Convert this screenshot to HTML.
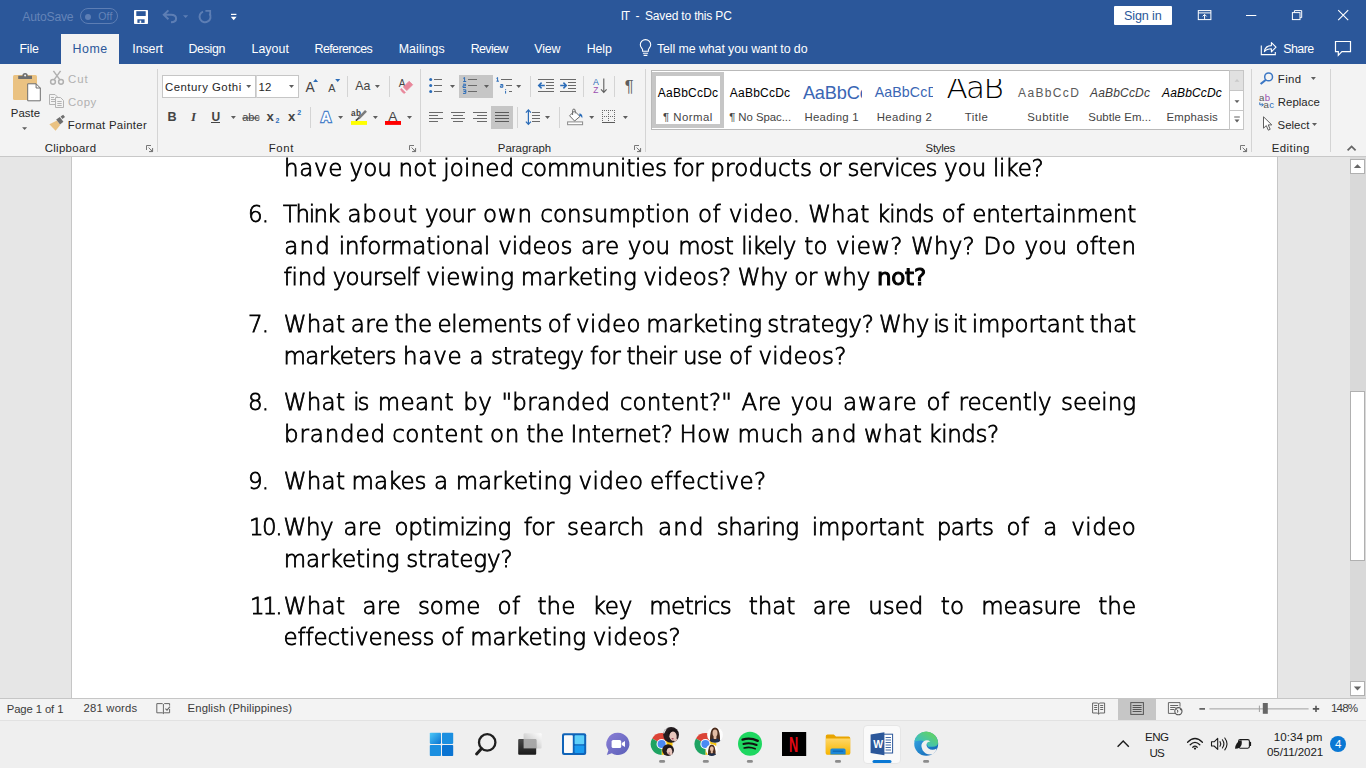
<!DOCTYPE html>
<html lang="en">
<head>
<meta charset="utf-8">
<title>IT - Word</title>
<style>
*{box-sizing:border-box;margin:0;padding:0}
html,body{width:1366px;height:768px;overflow:hidden;background:#f3f3f3}
body{font-family:"Liberation Sans","DejaVu Sans",sans-serif;font-size:12px;color:#262626;position:relative}
.abs{position:absolute}
.t{position:absolute;white-space:nowrap;line-height:1}
#titlebar{position:absolute;left:0;top:0;width:1366px;height:64px;background:#2b579a}
#ribbon{position:absolute;left:0;top:64px;width:1366px;height:93px;background:#f3f3f3;border-bottom:1px solid #c8c8c8;z-index:2}
#docarea{position:absolute;left:0;top:156px;width:1366px;height:542px;background:#e6e6e6;overflow:hidden}
#page{position:absolute;left:71px;top:-1px;width:1207px;height:546px;background:#fff;border-left:1px solid #c6c6c6;border-right:1px solid #c6c6c6}
#status{position:absolute;left:0;top:698px;width:1366px;height:22px;background:#f3f3f3;border-top:1px solid #c6c6c6}
#taskbar{position:absolute;left:0;top:720px;width:1366px;height:48px;background:#efefef}
.wt{color:#fff}
.sep{position:absolute;width:1px;background:#d4d4d4}
.dl{position:absolute;white-space:nowrap;line-height:1;color:#000;font-size:23px;font-weight:200;-webkit-text-stroke:0.8px #000;font-family:"DejaVu Sans Light","DejaVu Sans","Liberation Sans",sans-serif}
</style>
</head>
<body>
<div id="titlebar">
<div class="abs" style="left:61px;top:34px;width:58px;height:30px;background:#f3f3f3"></div>
<div class="abs" style="left:80px;top:8px;width:38px;height:16px;border:1px solid #5d7eb4;border-radius:8px"></div>
<div class="abs" style="left:85.4px;top:13.5px;width:6px;height:6px;border-radius:3px;background:#5d7eb4"></div>
<div class="abs" style="left:1114px;top:6px;width:58px;height:19px;background:#fff;border-radius:1px"></div>
<div class="t" style="left:22.35px;top:11.15px;font-size:12.2px;letter-spacing:-0.222px;color:#6484b8">AutoSave</div>
<div class="t" style="left:98.27px;top:11.00px;font-size:10.5px;letter-spacing:0.129px;color:#6484b8">Off</div>
<div class="t" style="left:620.76px;top:10.25px;font-size:12px;letter-spacing:-1.292px;color:#ffffff">IT</div>
<div class="t" style="left:635.56px;top:10.25px;font-size:12px;letter-spacing:0.000px;color:#ffffff">-</div>
<div class="t" style="left:644.96px;top:10.25px;font-size:12px;letter-spacing:-0.167px;color:#ffffff">Saved to this PC</div>
<div class="t" style="left:1124.12px;top:9.95px;font-size:12.6px;letter-spacing:-0.159px;color:#2b579a">Sign in</div>
<div class="t" style="left:19.53px;top:43.05px;font-size:12.4px;letter-spacing:-0.211px;color:#ffffff">File</div>
<div class="t" style="left:72.53px;top:43.05px;font-size:12.4px;letter-spacing:0.524px;color:#2b579a">Home</div>
<div class="t" style="left:132.33px;top:43.05px;font-size:12.4px;letter-spacing:-0.093px;color:#ffffff">Insert</div>
<div class="t" style="left:188.53px;top:43.05px;font-size:12.4px;letter-spacing:-0.348px;color:#ffffff">Design</div>
<div class="t" style="left:251.53px;top:43.05px;font-size:12.4px;letter-spacing:0.027px;color:#ffffff">Layout</div>
<div class="t" style="left:314.53px;top:43.05px;font-size:12.4px;letter-spacing:-0.571px;color:#ffffff">References</div>
<div class="t" style="left:398.73px;top:43.05px;font-size:12.4px;letter-spacing:0.083px;color:#ffffff">Mailings</div>
<div class="t" style="left:470.63px;top:43.05px;font-size:12.4px;letter-spacing:-0.561px;color:#ffffff">Review</div>
<div class="t" style="left:534.33px;top:43.05px;font-size:12.4px;letter-spacing:-0.168px;color:#ffffff">View</div>
<div class="t" style="left:586.63px;top:43.05px;font-size:12.4px;letter-spacing:-0.049px;color:#ffffff">Help</div>
<div class="t" style="left:656.93px;top:43.05px;font-size:12.4px;letter-spacing:-0.087px;color:#ffffff">Tell me what you want to do</div>
<div class="t" style="left:1283.23px;top:43.05px;font-size:12.4px;letter-spacing:-0.536px;color:#ffffff">Share</div>
<svg class="abs" style="left:0;top:0" width="1366" height="64" viewBox="0 0 1366 64" fill="none">
<!-- save -->
<rect x="134" y="10" width="14" height="14" rx="0.8" fill="#fff"/>
<rect x="136.3" y="11.2" width="9.4" height="4.8" fill="#2b579a"/>
<rect x="137.4" y="19.3" width="7.2" height="3.6" fill="#2b579a"/>
<rect x="139.6" y="20.6" width="1.6" height="2.3" fill="#fff"/>
<!-- undo -->
<path d="M168.4 10.4 L163.8 14.8 L168.4 19.2 M164.2 14.8 H171 C177.8 14.8 177.8 22.2 171 22.2" stroke="#5d7eb4" stroke-width="2"/>
<path d="M183 15.2 h5.2 l-2.6 2.8 z" fill="#5d7eb4"/>
<!-- redo -->
<path d="M209.6 13.6 A5.5 5.5 0 1 1 203 11.6" stroke="#5d7eb4" stroke-width="2"/>
<path d="M205.4 10.8 H210.2 V15.4" stroke="#5d7eb4" stroke-width="1.8"/>
<!-- customize -->
<rect x="231" y="13.8" width="5.4" height="1.2" fill="#fff"/>
<path d="M230.8 16.8 h5.8 l-2.9 3.4 z" fill="#fff"/>
<!-- ribbon display -->
<rect x="1198.3" y="10.6" width="12.6" height="9" stroke="#fff" stroke-width="1"/>
<path d="M1198.3 12.9 h12.6" stroke="#fff" stroke-width="1"/>
<path d="M1204.6 19 v-4.4 M1202.6 16.4 l2 -2 l2 2" stroke="#fff" stroke-width="1"/>
<!-- min -->
<path d="M1246 15.5 h10.3" stroke="#fff" stroke-width="1"/>
<!-- restore -->
<rect x="1292.4" y="12.6" width="7.6" height="7" stroke="#fff" stroke-width="1"/>
<path d="M1294.4 12.4 v-1.8 h7.3 v7 h-1.6" stroke="#fff" stroke-width="1"/>
<!-- close -->
<path d="M1338.2 10.2 l10 10 M1348.2 10.2 l-10 10" stroke="#fff" stroke-width="1.1"/>
<!-- lightbulb -->
<path d="M642.6 51.2 v-1.4 c0 -1.4 -2.3 -2.4 -2.3 -5 a5.2 5.2 0 0 1 10.4 0 c0 2.6 -2.3 3.6 -2.3 5 v1.4 z" stroke="#fff" stroke-width="1.1"/>
<path d="M642.9 53.3 h5.2 M643.6 55.4 h3.8" stroke="#fff" stroke-width="1.1"/>
<!-- share -->
<path d="M1261.3 45.6 v9 h14 v-2.6" stroke="#fff" stroke-width="1.1"/>
<path d="M1264.4 51.6 c0.6 -4 3.4 -6 7 -6 v-3 l4.6 4.6 l-4.6 4.6 v-3 c-3 0 -5.2 0.6 -7 2.8 z" stroke="#fff" stroke-width="1.1" stroke-linejoin="round"/>
<!-- comment -->
<path d="M1335.5 41.5 h15 v10.2 h-8.6 l-3.6 3.6 v-3.6 h-2.8 z" stroke="#fff" stroke-width="1.2"/>
</svg>

</div>
<div id="ribbon">
<div class="abs" style="left:459px;top:11px;width:34px;height:23px;background:#c6c6c6"></div>
<div class="abs" style="left:491px;top:42px;width:22px;height:23px;background:#c6c6c6"></div>
<div class="abs" style="left:162px;top:11.4px;width:94px;height:22.4px;background:#fff;border:1px solid #c6c6c6"></div>
<div class="abs" style="left:256px;top:11.4px;width:43px;height:22.4px;background:#fff;border:1px solid #c6c6c6;border-left-color:#d8d8d8"></div>
<div class="sep" style="left:157px;top:4.5px;height:83px"></div>
<div class="sep" style="left:420px;top:4.5px;height:83px"></div>
<div class="sep" style="left:645px;top:4.5px;height:83px"></div>
<div class="sep" style="left:1251px;top:4.5px;height:83px"></div>
<div class="sep" style="left:1330px;top:4.5px;height:83px"></div>
<div class="sep" style="left:347px;top:12.2px;height:20.6px"></div>
<div class="sep" style="left:389px;top:12.2px;height:20.6px"></div>
<div class="sep" style="left:530px;top:12.2px;height:20.6px"></div>
<div class="sep" style="left:583px;top:12.2px;height:20.6px"></div>
<div class="sep" style="left:614px;top:12.2px;height:20.6px"></div>
<div class="sep" style="left:310px;top:43.1px;height:20.6px"></div>
<div class="sep" style="left:517px;top:43.1px;height:20.6px"></div>
<div class="sep" style="left:559px;top:43.1px;height:20.6px"></div>
<div class="t" style="left:10.80px;top:43.55px;font-size:11.4px;letter-spacing:0.014px;color:#262626">Paste</div>
<div class="t" style="left:68.00px;top:9.55px;font-size:11.4px;letter-spacing:0.981px;color:#b1b1b1">Cut</div>
<div class="t" style="left:68.00px;top:32.55px;font-size:11.4px;letter-spacing:0.567px;color:#b1b1b1">Copy</div>
<div class="t" style="left:67.80px;top:55.55px;font-size:11.4px;letter-spacing:0.273px;color:#262626">Format Painter</div>
<div class="t" style="left:44.70px;top:78.55px;font-size:11.4px;letter-spacing:0.316px;color:#262626">Clipboard</div>
<div class="t" style="left:165.00px;top:17.55px;font-size:11.4px;letter-spacing:0.493px;color:#262626">Century Gothi</div>
<div class="t" style="left:258.50px;top:17.55px;font-size:11.4px;letter-spacing:0.128px;color:#262626">12</div>
<div class="t" style="left:268.70px;top:78.55px;font-size:11.4px;letter-spacing:0.666px;color:#262626">Font</div>
<div class="t" style="left:167.62px;top:46.95px;font-size:12.6px;letter-spacing:0.000px;color:#444444;font-weight:700">B</div>
<div class="t" style="left:191.00px;top:46.25px;font-size:13px;letter-spacing:0.000px;color:#444444;font-weight:700;font-style:italic;font-family:'Liberation Serif',sans-serif">I</div>
<div class="t" style="left:211.46px;top:47.25px;font-size:12px;letter-spacing:0.000px;color:#444444;font-weight:700;border-bottom:1px solid #444;height:12.2px">U</div>
<div class="t" style="left:242.13px;top:47.75px;font-size:11px;letter-spacing:-0.055px;color:#444444">abc</div>
<div class="t" style="left:266.48px;top:46.15px;font-size:13.2px;letter-spacing:0.000px;color:#444444;font-weight:700">x</div>
<div class="t" style="left:275.40px;top:53.25px;font-size:7px;letter-spacing:0.000px;color:#2b6cb8;font-weight:700">2</div>
<div class="t" style="left:288.08px;top:46.15px;font-size:13.2px;letter-spacing:0.000px;color:#444444;font-weight:700">x</div>
<div class="t" style="left:297.20px;top:45.25px;font-size:7px;letter-spacing:0.000px;color:#2b6cb8;font-weight:700">2</div>
<div class="t" style="left:305.40px;top:16.85px;font-size:13.8px;letter-spacing:0.000px;color:#444444">A</div>
<div class="t" style="left:328.30px;top:18.85px;font-size:10.8px;letter-spacing:0.000px;color:#444444">A</div>
<div class="t" style="left:355.20px;top:16.05px;font-size:12.4px;letter-spacing:0.044px;color:#444444">Aa</div>
<div class="t" style="left:398.80px;top:14.75px;font-size:10px;letter-spacing:0.000px;color:#444444">A</div>
<div class="t" style="left:350.90px;top:45.65px;font-size:8.2px;letter-spacing:0.438px;color:#444444;font-weight:700">ab</div>
<div class="t" style="left:321.10px;top:46.25px;font-size:14px;letter-spacing:0.000px;color:#fff;font-weight:700;-webkit-text-stroke:2.4px #3f78c4;paint-order:stroke fill;text-shadow:0 0 1.5px #9fc0ea">A</div>
<div class="t" style="left:388.30px;top:45.95px;font-size:13.6px;letter-spacing:0.000px;color:#444444">A</div>
<div class="t" style="left:497.80px;top:78.55px;font-size:11.4px;letter-spacing:0.024px;color:#262626">Paragraph</div>
<div class="t" style="left:593.10px;top:13.85px;font-size:8.8px;letter-spacing:0.000px;color:#2b6cb8">A</div>
<div class="t" style="left:593.20px;top:22.05px;font-size:8.4px;letter-spacing:0.000px;color:#9b4fb0">Z</div>
<div class="t" style="left:624.70px;top:14.00px;font-size:16.5px;letter-spacing:0.000px;color:#5e5e5e">&para;</div>
<div class="t" style="left:925.60px;top:78.55px;font-size:11.4px;letter-spacing:-0.267px;color:#262626">Styles</div>
<div class="t" style="left:1277.80px;top:9.55px;font-size:11.4px;letter-spacing:0.375px;color:#262626">Find</div>
<div class="t" style="left:1277.80px;top:32.55px;font-size:11.4px;letter-spacing:0.033px;color:#262626">Replace</div>
<div class="t" style="left:1277.50px;top:55.55px;font-size:11.4px;letter-spacing:0.045px;color:#262626">Select</div>
<div class="t" style="left:1271.70px;top:78.55px;font-size:11.4px;letter-spacing:0.475px;color:#262626">Editing</div>
<div class="t" style="left:1258.93px;top:28.95px;font-size:9.6px;letter-spacing:0.000px;color:#555">a</div>
<div class="t" style="left:1264.73px;top:28.95px;font-size:9.6px;letter-spacing:0.000px;color:#9b4fb0">b</div>
<div class="t" style="left:1263.53px;top:35.95px;font-size:9.6px;letter-spacing:0.000px;color:#555">a</div>
<div class="t" style="left:1269.33px;top:35.95px;font-size:9.6px;letter-spacing:0.000px;color:#2b6cb8">c</div>
<div class="abs" style="left:651px;top:6px;width:593px;height:60px;background:#fff;border:1px solid #b9b9b9"></div>
<div class="abs" style="left:652px;top:8px;width:72px;height:56px;border:4px solid #c6c6c6;background:#fff"></div>
<div class="abs" style="left:1229px;top:6px;width:15px;height:21.4px;background:#e1e1e1;border:1px solid #c6c6c6"></div>
<div class="abs" style="left:1229px;top:26.4px;width:15px;height:20.4px;background:#fff;border:1px solid #c6c6c6"></div>
<div class="abs" style="left:1229px;top:45.8px;width:15px;height:20.2px;background:#fff;border:1px solid #c6c6c6"></div>
<div class="t" style="left:657.86px;top:23.25px;font-size:12px;letter-spacing:0.213px;color:#000">AaBbCcDc</div>
<div class="t" style="left:663.10px;top:47.55px;font-size:11.4px;letter-spacing:0.457px;color:#444444">&para; Normal</div>
<div class="t" style="left:729.86px;top:23.25px;font-size:12px;letter-spacing:0.213px;color:#000">AaBbCcDc</div>
<div class="t" style="left:729.20px;top:47.55px;font-size:11.4px;letter-spacing:-0.052px;color:#444444">&para; No Spac...</div>
<div class="t" style="left:804.50px;top:47.55px;font-size:11.4px;letter-spacing:0.282px;color:#444444">Heading 1</div>
<div class="t" style="left:876.70px;top:47.55px;font-size:11.4px;letter-spacing:0.395px;color:#444444">Heading 2</div>
<div class="t" style="left:964.70px;top:47.55px;font-size:11.4px;letter-spacing:0.522px;color:#444444">Title</div>
<div class="t" style="left:1018.06px;top:23.25px;font-size:12px;letter-spacing:1.349px;color:#5a5a5a">AaBbCcD</div>
<div class="t" style="left:1027.20px;top:47.55px;font-size:11.4px;letter-spacing:0.528px;color:#444444">Subtitle</div>
<div class="t" style="left:1090.06px;top:23.25px;font-size:12px;letter-spacing:0.170px;color:#404040;font-style:italic">AaBbCcDc</div>
<div class="t" style="left:1088.30px;top:47.55px;font-size:11.4px;letter-spacing:0.068px;color:#444444">Subtle Em...</div>
<div class="t" style="left:1162.06px;top:23.25px;font-size:12px;letter-spacing:0.142px;color:#000;font-style:italic">AaBbCcDc</div>
<div class="t" style="left:1166.60px;top:47.55px;font-size:11.4px;letter-spacing:0.169px;color:#444444">Emphasis</div>
<div class="abs" style="left:796px;top:14px;width:65.6px;height:26px;overflow:hidden"><div class="t" style="left:6.90px;top:6.15px;font-size:18.2px;letter-spacing:-0.150px;color:#3a66b4">AaBbCc</div>
</div>
<div class="abs" style="left:868px;top:14px;width:65.2px;height:26px;overflow:hidden"><div class="t" style="left:6.70px;top:7.15px;font-size:14.2px;letter-spacing:0.120px;color:#3a66b4">AaBbCcD</div>
</div>
<div class="abs" style="left:940px;top:14.8px;width:72px;height:24px;overflow:hidden"><div class="t" style="left:6.4px;top:-6.6px;font-size:31px;color:#000;font-family:'DejaVu Sans Light','Liberation Sans',sans-serif;font-weight:200;letter-spacing:-1.5px">AaB</div></div>
<svg class="abs" style="left:0;top:0" width="1366" height="92" viewBox="0 64 1366 92" fill="none">
<defs>
<path id="dd" d="M0 0 h5 l-2.5 2.9 z" fill="#5e5e5e"/>
<path id="ln" d="M0 0 h7 M3 0 v-0.1" />
<g id="launch"><path d="M0.5 5 v-4.5 h4.5" stroke="#777" stroke-width="1"/><path d="M2.6 2.6 l3.6 3.6 M6.6 3 v3.6 h-3.6" stroke="#777" stroke-width="1"/><path d="M6.9 6.9 h-3.4 l3.4 -3.4 z" fill="#777"/></g>
</defs>
<!-- paste -->
<rect x="13" y="75" width="24" height="25" rx="1.5" fill="#eac282"/>
<path d="M18.2 79 v-3.2 h4.2 a2.7 2.7 0 0 1 5.4 0 h4.2 v3.2 z" fill="#6e6e6e"/>
<circle cx="25.1" cy="75.4" r="1" fill="#f3f3f3"/>
<path d="M27.7 83.8 h8.4 l4.2 4.2 v12.8 h-12.6 z" fill="#fff" stroke="#6e6e6e" stroke-width="1"/>
<path d="M36.1 83.8 v4.2 h4.2" stroke="#6e6e6e" stroke-width="1"/>
<use href="#dd" x="22.1" y="127.2"/>
<!-- cut -->
<g stroke="#b0b0b0" stroke-width="1.5">
<path d="M53.4 70.9 l6.6 9 M60.6 70.9 l-6.6 9"/>
<circle cx="53" cy="81.8" r="2.4"/><circle cx="61" cy="81.8" r="2.4"/>
</g>
<!-- copy -->
<g stroke="#b3b3b3" stroke-width="1" fill="#f3f3f3">
<path d="M49.5 94.5 h5.5 l2.5 2.5 v7.5 h-8 z"/>
<path d="M51 97.5 h3 M51 99.5 h4 M51 101.5 h4" />
<path d="M55.5 97.5 h5 l3 3 v7 h-8 z"/>
<path d="M57.3 101.5 h4.4 M57.3 103.5 h4.4 M57.3 105.5 h4.4"/>
</g>
<!-- format painter -->
<path d="M49.4 124.2 l7.6 -3.6 l3.2 4.4 l-4.6 5.8 z" fill="#eac282"/>
<path d="M56.2 119.6 l3.6 -2.6 l3.6 4.8 l-3.4 2.6 z" fill="#6e6e6e"/>
<path d="M60.6 116.6 l2.6 -1.9 l1.8 2.4 l-2.6 1.9 z" fill="#6e6e6e"/>
<use href="#launch" x="146" y="145"/>
<use href="#launch" x="409" y="145"/>
<use href="#launch" x="634" y="145"/>
<use href="#launch" x="1240" y="145"/>
<!-- combo arrows -->
<use href="#dd" x="246.2" y="85"/>
<use href="#dd" x="289" y="85"/>
<!-- underline arrow, abc strike -->
<use href="#dd" x="230.9" y="116"/>
<path d="M242.4 118 h17.2" stroke="#444" stroke-width="1"/>
<!-- grow/shrink triangles -->
<path d="M313.1 82.1 h5 l-2.5 -3.2 z" fill="#2b6cb8"/>
<path d="M335.2 78.9 h5 l-2.5 3.2 z" fill="#2b6cb8"/>
<use href="#dd" x="374.9" y="85"/>
<!-- eraser -->
<path d="M409.1 81.300 L412.700 84.700 L406.800 90.600 L403.400 87 Z" fill="#e8879a" stroke="#e8879a" stroke-width="0.800" stroke-linejoin="round"/>
<path d="M401.400 88.300 L405.600 92.500 L404.100 93.600 Q402 92.400 400.400 89.400 Z" fill="#e8879a" stroke="#e8879a" stroke-width="0.500" stroke-linejoin="round"/>
<!-- text effects A (text) -->
<use href="#dd" x="338.1" y="116"/>
<!-- highlight -->
<path d="M366 110.8 l-7.4 7.6" stroke="#7a7a7a" stroke-width="2.6"/>
<path d="M358.8 118.2 l-3 2.4" stroke="#444" stroke-width="1.6"/>
<rect x="351" y="121" width="16" height="3.9" fill="#ffff00"/>
<use href="#dd" x="372.9" y="116"/>
<rect x="385" y="121" width="16" height="3.9" fill="#ff0000"/>
<use href="#dd" x="407" y="116"/>
<!-- bullets -->
<g fill="#2b6cb8"><circle cx="430.7" cy="79.5" r="1.5"/><circle cx="430.7" cy="85.6" r="1.5"/><circle cx="430.7" cy="91.6" r="1.5"/></g>
<path d="M434 79.5 h8 M434 85.5 h8 M434 91.5 h8" stroke="#6a6a6a" stroke-width="1"/>
<use href="#dd" x="450" y="85"/>
<!-- numbering -->
<path d="M468 79.5 h9 M468 85.5 h9 M468 91.5 h9" stroke="#6a6a6a" stroke-width="1"/>
<g stroke="#2b6cb8" stroke-width="1">
<path d="M463.2 78.4 l1.4 -0.9 v4 M463.2 81.5 h3"/>
<path d="M463 84.2 h2.6 v1.6 h-2.6 v1.7 h3"/>
<path d="M463 89.8 h2.8 v3.6 h-2.8 M463.6 91.5 h2.2"/>
</g>
<use href="#dd" x="484" y="85"/>
<!-- multilevel -->
<path d="M501 79.5 h11 M506 85.5 h6 M509 91.5 h3" stroke="#6a6a6a" stroke-width="1"/>
<g stroke="#2b6cb8" stroke-width="1">
<path d="M496.4 78.4 l1.2 -0.9 v3.6 M496.4 81.2 h2.6"/>
<path d="M500.4 84.5 h2.4 v2.8 h-2.4 v-1.4 h2.4"/>
<path d="M505.6 89 v0.8 M505.6 90.8 v2.8"/>
</g>
<use href="#dd" x="516.2" y="85"/>
<!-- decrease indent -->
<path d="M538 79.5 h16 M546 82.5 h8 M546 85.5 h8 M546 88.5 h8 M538 91.5 h16" stroke="#6a6a6a" stroke-width="1"/>
<path d="M544.8 85.5 h-5.6 M541.6 82.6 l-2.9 2.9 l2.9 2.9" stroke="#2b6cb8" stroke-width="1.5"/>
<!-- increase indent -->
<path d="M560 79.5 h16 M568 82.5 h8 M568 85.5 h8 M568 88.5 h8 M560 91.5 h16" stroke="#6a6a6a" stroke-width="1"/>
<path d="M560.2 85.5 h5.6 M563.4 82.6 l2.9 2.9 l-2.9 2.9" stroke="#2b6cb8" stroke-width="1.5"/>
<!-- sort arrow -->
<path d="M603.8 78.4 v13.6 M601 89.4 l2.8 3 l2.8 -3" stroke="#5e5e5e" stroke-width="1.1"/>
<!-- align left -->
<path d="M429 112.5 h14 M429 115.5 h9 M429 118.5 h14 M429 121.5 h9" stroke="#6a6a6a" stroke-width="1"/>
<path d="M451 112.5 h14 M453 115.5 h10 M451 118.5 h14 M453 121.5 h10" stroke="#6a6a6a" stroke-width="1"/>
<path d="M473 112.5 h14 M477 115.5 h10 M473 118.5 h14 M477 121.5 h10" stroke="#6a6a6a" stroke-width="1"/>
<path d="M495 112.5 h14 M495 115.5 h14 M495 118.5 h14 M495 121.5 h14" stroke="#5a5a5a" stroke-width="1"/>
<!-- line spacing -->
<path d="M532 112.5 h8 M532 115.5 h8 M532 118.5 h8 M532 121.5 h8" stroke="#6a6a6a" stroke-width="1"/>
<path d="M528.4 110 v14.2 M525.9 112.6 l2.5 -2.8 l2.5 2.8 M525.9 121.6 l2.5 2.8 l2.5 -2.8" stroke="#2b6cb8" stroke-width="1.2"/>
<use href="#dd" x="545" y="116"/>
<!-- shading -->
<rect x="567.6" y="121.9" width="15" height="2.8" fill="#fff" stroke="#8a8a8a" stroke-width="1"/>
<path d="M574.4 111 l5.6 5.4 l-5.4 4.6 l-5 -5.2 z" fill="#fff" stroke="#6a6a6a" stroke-width="1"/>
<path d="M572.6 115 v-4.6 a1.3 1.3 0 0 1 2.6 0 v3" stroke="#6a6a6a" stroke-width="1"/>
<path d="M579.6 113.2 c2.2 0.6 3.4 2.4 2.6 5 c-0.8 -1.6 -1.6 -2.2 -3 -2.2 z" fill="#2b6cb8"/>
<use href="#dd" x="589.2" y="116"/>
<!-- borders -->
<g stroke="#6a6a6a" stroke-width="1" stroke-dasharray="1 1">
<path d="M602 110.500 h13 M602 116.500 h13 M602.500 110 v12 M608.500 110 v12 M614.500 110 v12"/>
</g>
<path d="M602 122.500 h13" stroke="#5a5a5a" stroke-width="1"/>
<use href="#dd" x="622.9" y="116"/>
<!-- gallery scroll -->
<path d="M1234.5 81.8 h5 l-2.5 -2.9 z" fill="#c9c9c9"/>
<use href="#dd" x="1234.5" y="100.2"/>
<path d="M1234.2 117 h5.6" stroke="#5e5e5e" stroke-width="1"/>
<use href="#dd" x="1234.5" y="119.6"/>
<!-- find -->
<circle cx="1268.6" cy="76.9" r="3.9" stroke="#3a76c4" stroke-width="1.5"/>
<path d="M1265.6 80 l-5 4" stroke="#3a76c4" stroke-width="2.2"/>
<use href="#dd" x="1310.9" y="77.1"/>
<!-- replace arrow -->
<path d="M1259.8 102.4 v2.4 h3.4 M1261.8 103.2 l1.6 1.6 l-1.6 1.6" stroke="#2b6cb8" stroke-width="1"/>
<!-- select cursor -->
<path d="M1263.5 116.8 v11.4 l2.8 -2.6 l2 4.6 l1.9 -0.9 l-2 -4.4 h3.6 z" fill="#fff" stroke="#5e5e5e" stroke-width="1" stroke-linejoin="round"/>
<use href="#dd" x="1312" y="123"/>
<!-- collapse -->
<path d="M1347.6 150.4 l4 -4 l4 4" stroke="#666" stroke-width="1.8"/>
</svg>

</div>
<div id="docarea">
<div id="page"></div>
<div id="doctext" style="position:absolute;left:0;top:0;width:1350px;height:542px;will-change:transform">
<div class="dl" style="left:284.04px;top:0.75px;letter-spacing:0.673px">have</div>
<div class="dl" style="left:349.44px;top:0.75px;letter-spacing:0.112px">you</div>
<div class="dl" style="left:398.60px;top:0.75px;letter-spacing:0.104px">not</div>
<div class="dl" style="left:443.17px;top:0.75px;letter-spacing:0.154px">joined</div>
<div class="dl" style="left:520.65px;top:0.75px;letter-spacing:-0.223px">communities</div>
<div class="dl" style="left:673.24px;top:0.75px;letter-spacing:-0.517px">for</div>
<div class="dl" style="left:710.22px;top:0.75px;letter-spacing:0.186px">products</div>
<div class="dl" style="left:818.41px;top:0.75px;letter-spacing:-0.447px">or</div>
<div class="dl" style="left:847.52px;top:0.75px;letter-spacing:-0.614px">services</div>
<div class="dl" style="left:943.91px;top:0.75px;letter-spacing:0.112px">you</div>
<div class="dl" style="left:992.92px;top:0.75px;letter-spacing:-0.179px">like?</div>
<div class="dl" style="left:282.97px;top:46.75px;letter-spacing:-1.464px">Think</div>
<div class="dl" style="left:347.50px;top:46.75px;letter-spacing:0.777px">about</div>
<div class="dl" style="left:424.93px;top:46.75px;letter-spacing:-0.498px">your</div>
<div class="dl" style="left:483.08px;top:46.75px;letter-spacing:0.722px">own</div>
<div class="dl" style="left:540.21px;top:46.75px;letter-spacing:0.093px">consumption</div>
<div class="dl" style="left:698.11px;top:46.75px;letter-spacing:0.387px">of</div>
<div class="dl" style="left:728.83px;top:46.75px;letter-spacing:0.300px">video.</div>
<div class="dl" style="left:808.14px;top:46.75px;letter-spacing:0.235px">What</div>
<div class="dl" style="left:876.77px;top:46.75px;letter-spacing:-0.880px">kinds</div>
<div class="dl" style="left:941.69px;top:46.75px;letter-spacing:0.387px">of</div>
<div class="dl" style="left:972.19px;top:46.75px;letter-spacing:-0.135px">entertainment</div>
<div class="dl" style="left:284.29px;top:78.75px;letter-spacing:1.186px">and</div>
<div class="dl" style="left:338.70px;top:78.75px;letter-spacing:-0.151px">informational</div>
<div class="dl" style="left:498.23px;top:78.75px;letter-spacing:-0.108px">videos</div>
<div class="dl" style="left:580.93px;top:78.75px;letter-spacing:0.497px">are</div>
<div class="dl" style="left:627.67px;top:78.75px;letter-spacing:0.112px">you</div>
<div class="dl" style="left:678.14px;top:78.75px;letter-spacing:-0.637px">most</div>
<div class="dl" style="left:741.19px;top:78.75px;letter-spacing:-0.876px">likely</div>
<div class="dl" style="left:804.16px;top:78.75px;letter-spacing:0.222px">to</div>
<div class="dl" style="left:836.00px;top:78.75px;letter-spacing:0.350px">view?</div>
<div class="dl" style="left:911.07px;top:78.75px;letter-spacing:0.181px">Why?</div>
<div class="dl" style="left:983.42px;top:78.75px;letter-spacing:0.666px">Do</div>
<div class="dl" style="left:1024.51px;top:78.75px;letter-spacing:0.112px">you</div>
<div class="dl" style="left:1075.42px;top:78.75px;letter-spacing:0.259px">often</div>
<div class="dl" style="left:283.60px;top:109.75px;letter-spacing:-0.209px">find</div>
<div class="dl" style="left:332.73px;top:109.75px;letter-spacing:-0.733px">yourself</div>
<div class="dl" style="left:426.16px;top:109.75px;letter-spacing:0.044px">viewing</div>
<div class="dl" style="left:520.71px;top:109.75px;letter-spacing:-0.052px">marketing</div>
<div class="dl" style="left:643.32px;top:109.75px;letter-spacing:0.164px">videos?</div>
<div class="dl" style="left:737.78px;top:109.75px;letter-spacing:-0.356px">Why</div>
<div class="dl" style="left:794.16px;top:109.75px;letter-spacing:-0.447px">or</div>
<div class="dl" style="left:823.55px;top:109.75px;letter-spacing:-0.062px">why</div>
<div class="dl" style="left:283.82px;top:156.75px;letter-spacing:0.235px">What</div>
<div class="dl" style="left:350.63px;top:156.75px;letter-spacing:0.497px">are</div>
<div class="dl" style="left:394.39px;top:156.75px;letter-spacing:0.038px">the</div>
<div class="dl" style="left:437.41px;top:156.75px;letter-spacing:-0.256px">elements</div>
<div class="dl" style="left:547.82px;top:156.75px;letter-spacing:0.387px">of</div>
<div class="dl" style="left:576.09px;top:156.75px;letter-spacing:0.430px">video</div>
<div class="dl" style="left:646.13px;top:156.75px;letter-spacing:-0.052px">marketing</div>
<div class="dl" style="left:767.35px;top:156.75px;letter-spacing:-0.087px">strategy?</div>
<div class="dl" style="left:879.08px;top:156.75px;letter-spacing:-0.356px">Why</div>
<div class="dl" style="left:933.31px;top:156.75px;letter-spacing:-2.226px">is</div>
<div class="dl" style="left:952.99px;top:156.75px;letter-spacing:-1.329px">it</div>
<div class="dl" style="left:971.65px;top:156.75px;letter-spacing:-0.137px">important</div>
<div class="dl" style="left:1089.42px;top:156.75px;letter-spacing:-0.011px">that</div>
<div class="dl" style="left:283.44px;top:188.75px;letter-spacing:-0.521px">marketers</div>
<div class="dl" style="left:403.12px;top:188.75px;letter-spacing:0.673px">have</div>
<div class="dl" style="left:469.51px;top:188.75px;letter-spacing:2.064px">a</div>
<div class="dl" style="left:491.05px;top:188.75px;letter-spacing:-0.322px">strategy</div>
<div class="dl" style="left:590.07px;top:188.75px;letter-spacing:-0.517px">for</div>
<div class="dl" style="left:626.58px;top:188.75px;letter-spacing:-0.773px">their</div>
<div class="dl" style="left:682.96px;top:188.75px;letter-spacing:-0.580px">use</div>
<div class="dl" style="left:728.98px;top:188.75px;letter-spacing:0.387px">of</div>
<div class="dl" style="left:758.38px;top:188.75px;letter-spacing:0.164px">videos?</div>
<div class="dl" style="left:283.82px;top:234.75px;letter-spacing:0.235px">What</div>
<div class="dl" style="left:353.25px;top:234.75px;letter-spacing:-2.226px">is</div>
<div class="dl" style="left:377.77px;top:234.75px;letter-spacing:0.400px">meant</div>
<div class="dl" style="left:463.26px;top:234.75px;letter-spacing:0.312px">by</div>
<div class="dl" style="left:501.38px;top:234.75px;letter-spacing:0.299px">&quot;branded</div>
<div class="dl" style="left:619.65px;top:234.75px;letter-spacing:0.180px">content?&quot;</div>
<div class="dl" style="left:741.52px;top:234.75px;letter-spacing:0.400px">Are</div>
<div class="dl" style="left:790.71px;top:234.75px;letter-spacing:0.112px">you</div>
<div class="dl" style="left:842.98px;top:234.75px;letter-spacing:0.887px">aware</div>
<div class="dl" style="left:926.56px;top:234.75px;letter-spacing:0.387px">of</div>
<div class="dl" style="left:958.57px;top:234.75px;letter-spacing:-0.046px">recently</div>
<div class="dl" style="left:1061.01px;top:234.75px;letter-spacing:0.004px">seeing</div>
<div class="dl" style="left:284.10px;top:266.75px;letter-spacing:0.807px">branded</div>
<div class="dl" style="left:392.21px;top:266.75px;letter-spacing:0.444px">content</div>
<div class="dl" style="left:490.04px;top:266.75px;letter-spacing:0.649px">on</div>
<div class="dl" style="left:526.25px;top:266.75px;letter-spacing:0.038px">the</div>
<div class="dl" style="left:570.58px;top:266.75px;letter-spacing:-0.149px">Internet?</div>
<div class="dl" style="left:679.61px;top:266.75px;letter-spacing:0.391px">How</div>
<div class="dl" style="left:737.61px;top:266.75px;letter-spacing:0.539px">much</div>
<div class="dl" style="left:810.87px;top:266.75px;letter-spacing:1.186px">and</div>
<div class="dl" style="left:863.90px;top:266.75px;letter-spacing:0.452px">what</div>
<div class="dl" style="left:928.34px;top:266.75px;letter-spacing:-0.434px">kinds?</div>
<div class="dl" style="left:283.82px;top:313.75px;letter-spacing:0.235px">What</div>
<div class="dl" style="left:351.61px;top:313.75px;letter-spacing:-0.058px">makes</div>
<div class="dl" style="left:434.08px;top:313.75px;letter-spacing:2.064px">a</div>
<div class="dl" style="left:455.76px;top:313.75px;letter-spacing:-0.052px">marketing</div>
<div class="dl" style="left:578.49px;top:313.75px;letter-spacing:0.430px">video</div>
<div class="dl" style="left:650.02px;top:313.75px;letter-spacing:0.407px">effective?</div>
<div class="dl" style="left:283.52px;top:359.75px;letter-spacing:-0.356px">Why</div>
<div class="dl" style="left:343.42px;top:359.75px;letter-spacing:0.497px">are</div>
<div class="dl" style="left:394.49px;top:359.75px;letter-spacing:-0.317px">optimizing</div>
<div class="dl" style="left:523.74px;top:359.75px;letter-spacing:-0.517px">for</div>
<div class="dl" style="left:566.96px;top:359.75px;letter-spacing:0.207px">search</div>
<div class="dl" style="left:657.89px;top:359.75px;letter-spacing:1.186px">and</div>
<div class="dl" style="left:716.72px;top:359.75px;letter-spacing:-0.406px">sharing</div>
<div class="dl" style="left:811.70px;top:359.75px;letter-spacing:-0.137px">important</div>
<div class="dl" style="left:936.72px;top:359.75px;letter-spacing:-0.498px">parts</div>
<div class="dl" style="left:1006.62px;top:359.75px;letter-spacing:0.387px">of</div>
<div class="dl" style="left:1043.19px;top:359.75px;letter-spacing:2.064px">a</div>
<div class="dl" style="left:1071.34px;top:359.75px;letter-spacing:0.430px">video</div>
<div class="dl" style="left:283.67px;top:391.75px;letter-spacing:-0.052px">marketing</div>
<div class="dl" style="left:406.15px;top:391.75px;letter-spacing:-0.087px">strategy?</div>
<div class="dl" style="left:283.82px;top:438.75px;letter-spacing:0.235px">What</div>
<div class="dl" style="left:362.44px;top:438.75px;letter-spacing:0.497px">are</div>
<div class="dl" style="left:417.96px;top:438.75px;letter-spacing:-0.081px">some</div>
<div class="dl" style="left:497.62px;top:438.75px;letter-spacing:0.387px">of</div>
<div class="dl" style="left:537.50px;top:438.75px;letter-spacing:0.038px">the</div>
<div class="dl" style="left:592.41px;top:438.75px;letter-spacing:-0.098px">key</div>
<div class="dl" style="left:649.26px;top:438.75px;letter-spacing:-0.580px">metrics</div>
<div class="dl" style="left:748.67px;top:438.75px;letter-spacing:-0.011px">that</div>
<div class="dl" style="left:812.71px;top:438.75px;letter-spacing:0.497px">are</div>
<div class="dl" style="left:868.26px;top:438.75px;letter-spacing:-0.029px">used</div>
<div class="dl" style="left:940.69px;top:438.75px;letter-spacing:0.222px">to</div>
<div class="dl" style="left:981.21px;top:438.75px;letter-spacing:-0.061px">measure</div>
<div class="dl" style="left:1098.25px;top:438.75px;letter-spacing:0.038px">the</div>
<div class="dl" style="left:283.62px;top:469.75px;letter-spacing:-0.169px">effectiveness</div>
<div class="dl" style="left:440.92px;top:469.75px;letter-spacing:0.387px">of</div>
<div class="dl" style="left:470.20px;top:469.75px;letter-spacing:-0.052px">marketing</div>
<div class="dl" style="left:592.81px;top:469.75px;letter-spacing:0.164px">videos?</div>
<div class="dl" style="left:876.89px;top:109.75px;letter-spacing:-0.219px;font-weight:400;font-family:'DejaVu Sans',sans-serif;-webkit-text-stroke:1px #000">not?</div>
<div class="dl" style="left:248.00px;top:46.75px;letter-spacing:-0.958px">6.</div>
<div class="dl" style="left:248.10px;top:156.75px;letter-spacing:-0.958px">7.</div>
<div class="dl" style="left:248.10px;top:234.75px;letter-spacing:-0.958px">8.</div>
<div class="dl" style="left:248.10px;top:313.75px;letter-spacing:-0.958px">9.</div>
<div class="dl" style="left:248.97px;top:359.75px;letter-spacing:-1.524px">10.</div>
<div class="dl" style="left:249.97px;top:438.75px;letter-spacing:-2.024px">11.</div>

</div>
<div class="abs" style="left:1350px;top:0;width:16px;height:542px;background:#d9d9d9"></div>
<div class="abs" style="left:1350px;top:3px;width:15px;height:15px;background:#fff;border:1px solid #b0b0b0"></div>
<div class="abs" style="left:1350px;top:525px;width:15px;height:15px;background:#fff;border:1px solid #b0b0b0"></div>
<div class="abs" style="left:1350px;top:235px;width:15px;height:170px;background:#fff;border:1px solid #b0b0b0"></div>
<svg class="abs" style="left:1350px;top:0" width="16" height="542" viewBox="1350 156 16 542"><path d="M1353.8 168.1 h7.4 l-3.7 -3.9 z" fill="#666"/><path d="M1353.8 686.6 h7.4 l-3.7 3.9 z" fill="#666"/></svg>

</div>
<div id="status">
<div class="abs" style="left:1118px;top:0;width:38px;height:21px;background:#c6c6c6"></div>
<div class="t" style="left:6.71px;top:4.60px;font-size:11.3px;letter-spacing:-0.101px;color:#3b3b3b">Page 1 of 1</div>
<div class="t" style="left:83.50px;top:3.60px;font-size:11.3px;letter-spacing:0.196px;color:#3b3b3b">281 words</div>
<div class="t" style="left:187.61px;top:3.60px;font-size:11.3px;letter-spacing:0.101px;color:#3b3b3b">English (Philippines)</div>
<div class="t" style="left:1331.00px;top:3.45px;font-size:11.6px;letter-spacing:-0.852px;color:#3b3b3b">148%</div>
<svg class="abs" style="left:0;top:0" width="1366" height="21" viewBox="0 699 1366 21" fill="none">
<!-- proofing -->
<path d="M156.8 703.6 h5.6 l1 1 v9 l-1 -0.8 h-5.6 z M169.6 709 v3.8 h-5.2 l-1 0.8" stroke="#666" stroke-width="1"/>
<path d="M163.4 704.6 l1 -1 h5.2 v2" stroke="#666" stroke-width="1"/>
<path d="M165.4 708.6 l1.6 1.6 l3 -3.6" stroke="#666" stroke-width="1.1"/>
<!-- read mode -->
<path d="M1092.6 703 h5 l1 1 l1 -1 h5 v10 h-5 l-1 1 l-1 -1 h-5 z M1098.6 704 v10.6" stroke="#666" stroke-width="1"/>
<path d="M1094.2 705.5 h3 M1094.2 707.5 h3 M1094.2 709.5 h3 M1100.2 705.5 h3 M1100.2 707.5 h3 M1100.2 709.5 h3" stroke="#666" stroke-width="1"/>
<!-- print layout -->
<rect x="1130.8" y="702.6" width="12.6" height="11.8" stroke="#555" stroke-width="1"/>
<path d="M1132.6 705.5 h9 M1132.6 707.5 h9 M1132.6 709.5 h9 M1132.6 711.5 h9" stroke="#555" stroke-width="1"/>
<!-- web layout -->
<path d="M1175 713.4 h-6.6 v-10.8 h11.6 v4" stroke="#666" stroke-width="1"/>
<path d="M1170.2 705.5 h8 M1170.2 707.5 h5.4 M1170.2 709.5 h4" stroke="#666" stroke-width="1"/>
<circle cx="1178.4" cy="711.2" r="3.6" fill="#f3f3f3" stroke="#555" stroke-width="1.1"/>
<path d="M1176.4 709.4 l1.6 1.4 l-0.6 1.8 M1180 709 l1.4 1.6" stroke="#555" stroke-width="1"/>
<!-- zoom -->
<path d="M1199.4 708.9 h5.6" stroke="#555" stroke-width="1.6"/>
<path d="M1209.4 708.9 h99.2" stroke="#a0a0a0" stroke-width="1"/>
<path d="M1259.4 705.6 v6.4" stroke="#a0a0a0" stroke-width="1"/>
<rect x="1262.8" y="703" width="5" height="10.8" fill="#666"/>
<path d="M1312.8 708.9 h6.4 M1316 705.7 v6.4" stroke="#555" stroke-width="1.6"/>
</svg>

</div>
<div id="taskbar">
<div class="abs" style="left:0;top:0;width:1366px;height:1px;background:#e2e2e2"></div>
<div class="abs" style="left:863px;top:5px;width:38px;height:39px;background:#fafafa;border:1px solid #e6e6e6;border-radius:4px"></div>
<div class="abs" style="left:1330px;top:16px;width:16px;height:16px;border-radius:8px;background:#0a78d4"></div>
<div class="t" style="left:1144.99px;top:11.45px;font-size:11.6px;letter-spacing:-0.550px;color:#1b1b1b">ENG</div>
<div class="t" style="left:1149.39px;top:27.45px;font-size:11.6px;letter-spacing:-0.785px;color:#1b1b1b">US</div>
<div class="t" style="left:1273.80px;top:11.45px;font-size:11.6px;letter-spacing:0.037px;color:#1b1b1b">10:34 pm</div>
<div class="t" style="left:1267.00px;top:26.45px;font-size:11.6px;letter-spacing:-0.108px;color:#1b1b1b">05/11/2021</div>
<svg class="abs" style="left:0;top:0" width="1366" height="48" viewBox="0 720 1366 48" fill="none">
<defs>
<linearGradient id="wg" x1="0" y1="0" x2="1" y2="1"><stop offset="0" stop-color="#4cc8f8"/><stop offset="1" stop-color="#0a74d2"/></linearGradient>
<linearGradient id="tvd" x1="0" y1="0" x2="0" y2="1"><stop offset="0" stop-color="#4a4a4a"/><stop offset="1" stop-color="#1a1a1a"/></linearGradient>
<linearGradient id="tvl" x1="1" y1="0" x2="0" y2="1"><stop offset="0" stop-color="#ffffff"/><stop offset="1" stop-color="#b5b5b5"/></linearGradient>
<linearGradient id="chat" x1="0" y1="0" x2="1" y2="1"><stop offset="0" stop-color="#8b7fd6"/><stop offset="1" stop-color="#5a5fb8"/></linearGradient>
<linearGradient id="fold" x1="0" y1="0" x2="0" y2="1"><stop offset="0" stop-color="#ffd766"/><stop offset="1" stop-color="#f7b500"/></linearGradient>
<linearGradient id="edge1" x1="0" y1="0" x2="1" y2="1"><stop offset="0" stop-color="#3bb0e8"/><stop offset="1" stop-color="#0d5cb0"/></linearGradient>
<linearGradient id="edge2" x1="0" y1="1" x2="1" y2="0"><stop offset="0" stop-color="#2fb6e9"/><stop offset="1" stop-color="#6bd84a"/></linearGradient>
<g id="chrome">
<circle cx="0" cy="0" r="11.6" fill="#fff"/>
<path d="M0 0 L-10.05 -5.8 A11.6 11.6 0 0 1 10.05 -5.8 Z" fill="#db4437"/>
<path d="M0 0 L10.05 -5.8 A11.6 11.6 0 0 1 0 11.6 Z" fill="#f4c20d"/>
<path d="M0 0 L0 11.6 A11.6 11.6 0 0 1 -10.05 -5.8 Z" fill="#1ea362"/>
<circle cx="0" cy="0" r="5.4" fill="#fff"/>
<circle cx="0" cy="0" r="4.3" fill="#4a8af4"/>
</g>
<path id="ind" d="M0 0 h3.4" stroke="#8c8c8c" stroke-width="2.6" stroke-linecap="round"/>
</defs>
<!-- windows -->
<rect x="429.8" y="732.8" width="11.2" height="11.1" rx="0.8" fill="url(#wg)"/>
<rect x="442" y="732.8" width="11.2" height="11.1" rx="0.8" fill="#1b8fe0"/>
<rect x="429.8" y="744.9" width="11.2" height="11.1" rx="0.8" fill="#1b8fe0"/>
<rect x="442" y="744.9" width="11.2" height="11.1" rx="0.8" fill="#0a74d2"/>
<!-- search -->
<circle cx="487.2" cy="742.4" r="8.2" stroke="#1f1f1f" stroke-width="2.3"/>
<path d="M481.6 748.6 l-5 5.4" stroke="#1f1f1f" stroke-width="3" stroke-linecap="round"/>
<!-- task view -->
<rect x="523.6" y="733.2" width="18" height="15.2" rx="1" fill="url(#tvl)"/>
<rect x="518.2" y="739" width="18" height="15.7" rx="1" fill="url(#tvd)"/>
<rect x="523.6" y="739" width="12.6" height="9.4" fill="#b4b4b4" opacity="0.9"/>
<!-- widgets -->
<rect x="562" y="733.2" width="24.2" height="21.8" rx="2" fill="#0f63b8"/>
<rect x="564" y="735.2" width="8.8" height="17.8" rx="0.8" fill="#fafafa"/>
<rect x="574.6" y="735.2" width="9.6" height="9" rx="0.8" fill="#5fd0fa"/>
<rect x="574.6" y="745.4" width="9.6" height="7.6" rx="0.8" fill="#1a9bf0"/>
<!-- chat -->
<path d="M618 732.8 a11.4 11.1 0 1 1 -6.2 20.4 l-5 1.8 l1.6 -4.8 a11.4 11.1 0 0 1 9.6 -17.4 z" fill="url(#chat)"/>
<rect x="611.6" y="740" width="9.6" height="8" rx="1.6" fill="#fff"/>
<path d="M621.8 743 l3.2 -2 v6 l-3.2 -2 z" fill="#fff"/>
<!-- chrome 1 -->
<use href="#chrome" transform="translate(661.6 744) scale(0.94)"/>
<clipPath id="av1"><circle cx="671.1" cy="734.8" r="7.9"/></clipPath>
<g clip-path="url(#av1)">
<rect x="663" y="726" width="17" height="17" fill="#241c1f"/>
<path d="M663 726 h7 l-3.400 3 l-2.400 4.600 h-1.200 z" fill="#e9e9ea"/>
<ellipse cx="672.9" cy="735.900" rx="3.700" ry="4.900" transform="rotate(-14 672.9 735.9)" fill="#e7c7bd"/>
<path d="M667.600 733.400 q1.600 -4.200 5.600 -4.200 q3.400 0.200 4.600 3.200 q-2.600 -1.400 -5 -0.800 q-3 0.600 -3.600 4.600 z" fill="#1a1416"/>
<ellipse cx="672.600" cy="738.700" rx="1.200" ry="0.700" fill="#a4475a"/>
<ellipse cx="675.800" cy="740.300" rx="1.700" ry="2" fill="#e3c0b6"/>
</g>
<clipPath id="av2"><circle cx="668.1" cy="750.1" r="5.900"/></clipPath>
<g clip-path="url(#av2)">
<rect x="662" y="744" width="13" height="13" fill="#241c1f"/>
<ellipse cx="669.400" cy="751" rx="2.800" ry="3.700" transform="rotate(-14 669.4 751)" fill="#e7c7bd"/>
<path d="M665.400 749.200 q1.200 -3.200 4.200 -3.200 q2.600 0.200 3.400 2.400 q-2 -1 -3.800 -0.600 q-2.200 0.400 -2.700 3.400 z" fill="#1a1416"/>
<ellipse cx="669.200" cy="753.100" rx="0.900" ry="0.500" fill="#a4475a"/>
<ellipse cx="671.600" cy="754.300" rx="1.300" ry="1.500" fill="#e3c0b6"/>
</g>
<use href="#ind" x="660.4" y="761.4"/>
<!-- chrome 2 -->
<use href="#chrome" transform="translate(705.4 744) scale(0.94)"/>
<clipPath id="av3"><circle cx="715" cy="734.8" r="7.900"/></clipPath>
<circle cx="715" cy="734.8" r="7.900" fill="#fdfdfd"/>
<g clip-path="url(#av3)">
<path d="M710 742 q-0.400 -14.600 5 -14.600 q5.400 0 5 14.600 z" fill="#4b2c1d"/>
<ellipse cx="715" cy="733" rx="2.500" ry="3.500" fill="#e3bba3"/>
<path d="M713.600 736 h2.800 v3 h-2.800 z" fill="#e3bba3"/>
<path d="M708.400 743.600 q0.600 -4.400 4.800 -5 l1.800 1.600 l1.800 -1.600 q4.200 0.600 4.800 5 z" fill="#1f2f4c"/>
</g>
<clipPath id="av4"><circle cx="711.8" cy="750.1" r="5.900"/></clipPath>
<circle cx="711.8" cy="750.1" r="5.900" fill="#fdfdfd"/>
<g clip-path="url(#av4)">
<path d="M708 755.600 q-0.300 -11 3.800 -11 q4.100 0 3.800 11 z" fill="#4b2c1d"/>
<ellipse cx="711.800" cy="748.800" rx="1.900" ry="2.600" fill="#e3bba3"/>
<path d="M710.800 751 h2 v2.200 h-2 z" fill="#e3bba3"/>
<path d="M706.800 756.600 q0.500 -3.300 3.600 -3.700 l1.400 1.200 l1.400 -1.200 q3.100 0.400 3.600 3.700 z" fill="#1f2f4c"/>
</g>
<use href="#ind" x="704.1" y="761.4"/>
<!-- spotify -->
<circle cx="750" cy="743.7" r="12" fill="#1ed760"/>
<path d="M742.6 739.6 q7.6 -2.4 15.2 1.2" stroke="#111" stroke-width="2.4" stroke-linecap="round"/>
<path d="M743.4 744 q6.6 -2 13.2 1" stroke="#111" stroke-width="2" stroke-linecap="round"/>
<path d="M744.2 748 q5.6 -1.6 11 0.8" stroke="#111" stroke-width="1.6" stroke-linecap="round"/>
<use href="#ind" x="748.2" y="761.4"/>
<!-- netflix -->
<rect x="782" y="732" width="24.2" height="24" fill="#000"/>
<!-- explorer -->
<path d="M825.8 736 q0 -1.6 1.6 -1.6 h6.4 l2.2 2 h12.6 q1.6 0 1.6 1.6 v15.2 q0 1.4 -1.6 1.4 h-21.2 q-1.6 0 -1.6 -1.4 z" fill="#e8a400"/>
<path d="M825.8 738.6 h24.4 v14.6 q0 1.4 -1.6 1.4 h-21.2 q-1.6 0 -1.6 -1.4 z" fill="url(#fold)"/>
<path d="M830.4 754.6 v-4.6 q0 -1.6 1.6 -1.6 h12 q1.6 0 1.6 1.6 v4.6 z" fill="#1b87d6"/>
<path d="M833.4 751.2 h9.2" stroke="#0f6cb8" stroke-width="1.4" stroke-linecap="round"/>
<use href="#ind" x="836.3" y="761.4"/>
<!-- word -->
<rect x="881" y="734.2" width="11.6" height="18.8" fill="#fff" stroke="#2b579a" stroke-width="1"/>
<path d="M885.6 737.5 h5.4 M885.6 740 h5.4 M885.6 742.5 h5.4 M885.6 745 h5.4 M885.6 747.5 h5.4 M885.6 750 h5.4" stroke="#2b579a" stroke-width="0.9"/>
<path d="M870.6 734.4 l13.8 -2.2 v23 l-13.8 -2.2 z" fill="#2b579a"/>
<path d="M874 761.5 h16" stroke="#0a78d4" stroke-width="3" stroke-linecap="round"/>
<!-- edge -->
<circle cx="926.2" cy="743.7" r="12" fill="url(#edge1)"/>
<path d="M914.4 741.6 a12 12 0 0 1 23.6 -0.4 q0.6 5.6 -5.6 5.6 h-4.4 q-1.6 -6.8 -7.6 -6.4 q-4 0.4 -6 1.2 z" fill="url(#edge2)"/>
<path d="M936.6 748.6 q-4.6 2.6 -8.4 -0.4 q-2.6 -2.4 -1.2 -5.2 q1.2 -1.8 3.4 -1.2 q-3 -2.6 -6.6 -0.6 q-4.2 3 -1.2 9 q3.400 5.400 10 4 q3 -1.400 4 -5.600 z" fill="#f0f0f0"/>
<use href="#ind" x="924.4" y="761.4"/>
<!-- tray chevron -->
<path d="M1117.6 746.8 l5.6 -5.8 l5.6 5.800" stroke="#1b1b1b" stroke-width="1.4"/>
<!-- wifi -->
<g stroke="#1b1b1b" stroke-width="1.3" stroke-linecap="round">
<path d="M1187.600 742.200 q7.400 -7.400 14.800 0"/>
<path d="M1190.200 744.800 q4.800 -4.800 9.600 0"/>
<path d="M1192.800 747.300 q2.200 -2.200 4.400 0"/>
</g>
<circle cx="1195" cy="748.600" r="1.100" fill="#1b1b1b"/>
<!-- volume -->
<path d="M1211.500 741.800 h2.600 l3.600 -3.400 v11 l-3.600 -3.400 h-2.600 z" stroke="#1b1b1b" stroke-width="1.100" stroke-linejoin="round"/>
<g stroke="#1b1b1b" stroke-width="1.100" stroke-linecap="round">
<path d="M1220 741.600 q1.600 2.300 0 4.600"/>
<path d="M1222.400 739.800 q3 4.100 0 8.200"/>
<path d="M1224.800 738 q4.400 5.900 0 11.800"/>
</g>
<!-- battery -->
<rect x="1238.600" y="739.600" width="10.800" height="8.600" rx="1.600" stroke="#1b1b1b" stroke-width="1.100"/>
<path d="M1250.400 742.400 v3" stroke="#1b1b1b" stroke-width="1.400" stroke-linecap="round"/>
<path d="M1235 748.800 q0.400 -6.600 6.400 -8.800 q1.400 4.600 -1.600 7.400 q-2 1.400 -4.800 1.400 z" fill="#1b1b1b"/>
</svg>
<div class="t" style="left:1335.10px;top:18.45px;font-size:11.6px;letter-spacing:0.000px;color:#fff">4</div>
<div class="t" style="left:873.20px;top:19.55px;font-size:10.4px;letter-spacing:0.000px;color:#fff;font-weight:700">W</div>
<div class="t" style="left:788.80px;top:13.60px;font-size:22.3px;letter-spacing:0.000px;color:#e50914;font-weight:700;transform:scaleX(0.57);transform-origin:0 0">N</div>

</div>
</body>
</html>
